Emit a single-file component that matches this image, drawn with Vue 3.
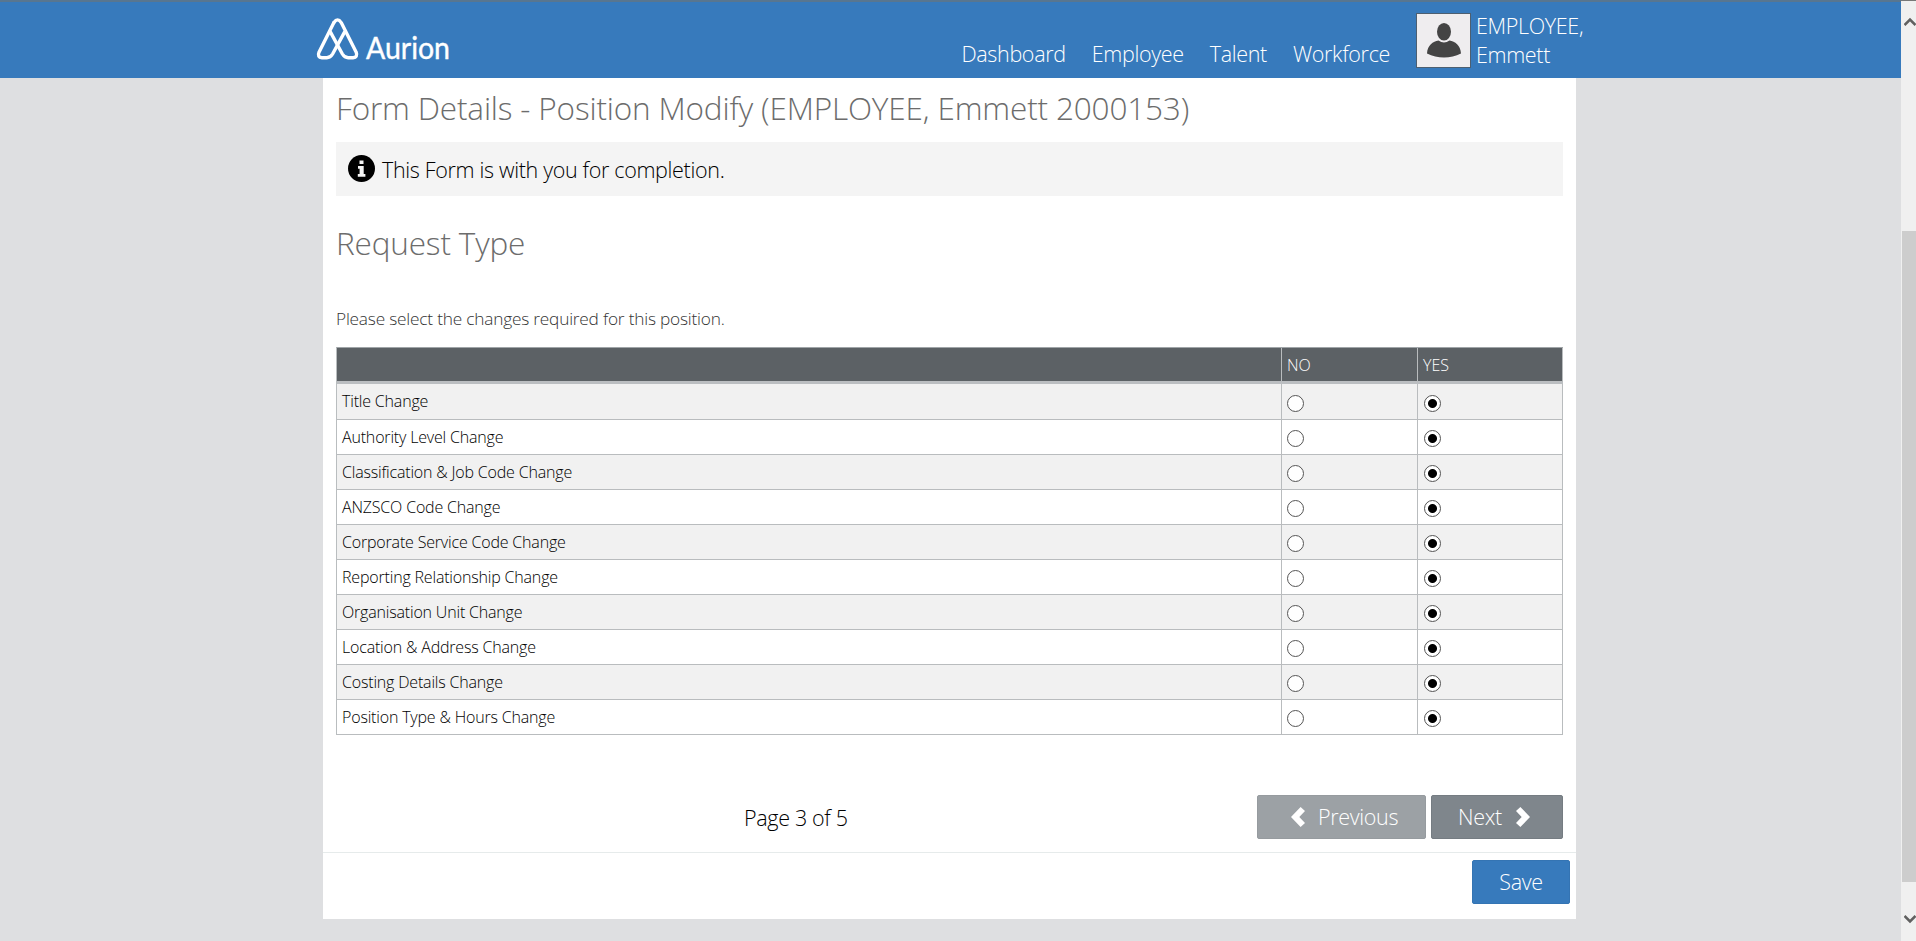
<script setup>
import { ref } from 'vue'

const nav = ['Dashboard', 'Employee', 'Talent', 'Workforce']
const rows = ref([
  'Title Change',
  'Authority Level Change',
  'Classification & Job Code Change',
  'ANZSCO Code Change',
  'Corporate Service Code Change',
  'Reporting Relationship Change',
  'Organisation Unit Change',
  'Location & Address Change',
  'Costing Details Change',
  'Position Type & Hours Change',
].map((label) => ({ label, value: 'yes' })))
</script>

<template>
  <div class="window">
    <div class="page">
      <header class="topbar">
        <svg class="logo" width="140" height="48" viewBox="0 0 140 48" role="img" aria-label="Aurion">
          <g fill="none" stroke="#fff" stroke-width="3.4" stroke-linejoin="round" stroke-linecap="round">
            <path d="M17.900 5.600Q21.600 0.200 25.200 5.600L40.200 35.200Q42 40.200 37 40.700H32.200Q28.600 40.700 26.400 37L14.600 15.400" />
            <path d="M17.900 5.600L3 35.200Q1 40.200 6 40.700H10.800Q14.400 40.700 16.600 37L28.400 15.400" />
          </g>
          <text class="wordmark" x="50" y="41.500" textLength="84" lengthAdjust="spacingAndGlyphs">Aurion</text>
        </svg>
        <nav class="nav">
          <a v-for="item in nav" :key="item">{{ item }}</a>
        </nav>
        <svg class="avatar" width="55" height="55" viewBox="0 0 55 55">
          <rect x="0.500" y="0.500" width="54" height="54" fill="#efedef" stroke="#4d5f70" />
          <ellipse cx="28" cy="18.700" rx="7" ry="8.800" fill="#444" />
          <path d="M11 40.500C11.500 32 17 28.500 22.500 27.500Q28 31.500 33.500 27.500C39 28.500 44.500 32 45 40.500Q37 44.500 28 44.500T11 40.500Z" fill="#444" />
        </svg>
        <div class="user"><span>EMPLOYEE,</span><span>Emmett</span></div>
      </header>

      <main class="panel">
        <div class="content">
          <h1>Form Details - Position Modify (EMPLOYEE, Emmett 2000153)</h1>
          <div class="info">
            <svg width="27" height="27" viewBox="0 0 27 27">
              <circle cx="13.500" cy="13.500" r="13.500" />
              <path d="M11.500 5.500h4v3.500h-4zM10 11h5.700v8h1.700v2.700h-7.600v-2.700h1.800v-5.300H10z" fill="#f4f4f4" />
            </svg>
            <span>This Form is with you for completion.</span>
          </div>
          <h2>Request Type</h2>
          <p class="hint">Please select the changes required for this position.</p>

          <div class="grid">
            <div class="row head"><div></div><div>NO</div><div>YES</div></div>
            <div v-for="(row, i) in rows" :key="row.label" class="row">
              <div>{{ row.label }}</div>
              <div><input v-model="row.value" type="radio" :name="'r' + i" value="no" /></div>
              <div><input v-model="row.value" type="radio" :name="'r' + i" value="yes" /></div>
            </div>
          </div>

          <div class="pager">
            <span class="count">Page 3 of 5</span>
            <button class="btn prev">
              <svg width="14" height="20" viewBox="0 0 14 20"><path d="M0 10L9.600 0L14 4L8.300 10L14 16L9.600 20Z" /></svg>
              <span>Previous</span>
            </button>
            <button class="btn next">
              <span>Next</span>
              <svg width="14" height="20" viewBox="0 0 14 20"><path d="M14 10L4.400 0L0 4L5.700 10L0 16L4.400 20Z" /></svg>
            </button>
          </div>
        </div>
        <footer class="actions"><button class="btn save"><span>Save</span></button></footer>
      </main>
    </div>

    <div class="scrollbar">
      <svg width="12" height="10" viewBox="0 0 12 10"><path d="M0.500 8L6 2.500L11.500 8" /></svg>
      <div class="thumb"></div>
      <svg width="12" height="10" viewBox="0 0 12 10"><path d="M0.500 2L6 7.500L11.500 2" /></svg>
    </div>
  </div>
</template>

<style>
body {
  background: #dedfe1;
  overflow: hidden;
}
</style>

<style scoped>
* {
  box-sizing: border-box;
}
.window {
  display: flex;
  height: 941px;
  font-family: 'Open Sans', 'Noto Sans', sans-serif;
  font-weight: 300;
  font-size: 21.5px;
  letter-spacing: -0.33px;
  color: #000;
  background: #dedfe1;
}
.page {
  width: 1901px;
}
.topbar {
  display: flex;
  height: 78px;
  padding-left: 316px;
  background: #377abc;
  border-top: 2px solid #587690;
  color: #fff;
}
.logo {
  margin-top: 15px;
}
.wordmark {
  font: 400 30px Lato, sans-serif;
  letter-spacing: 0;
  fill: #fff;
  stroke: #fff;
  stroke-width: 0.4px;
}
.nav {
  display: flex;
  gap: 26px;
  margin-left: auto;
  padding-top: 37px;
  line-height: 30px;
}
.avatar {
  margin: 11px 0 0 26px;
}
.user {
  display: flex;
  flex-direction: column;
  width: 430px;
  padding: 9px 0 0 5px;
  line-height: 29px;
}
.panel {
  width: 1253px;
  height: 841px;
  margin-left: 323px;
  background: #fff;
}
.content {
  padding: 0 13px;
}
h1,
h2 {
  margin: 0;
  font-size: 31.5px;
  font-weight: 300;
  letter-spacing: -0.16px;
  line-height: 60px;
  color: #6c6c6c;
}
h1 {
  padding-bottom: 4px;
}
h2 {
  padding-top: 17px;
}
.info {
  display: flex;
  align-items: center;
  gap: 7px;
  height: 54px;
  padding-left: 12px;
  background: #f4f4f4;
}
.info svg {
  margin-top: -2px;
}
.hint {
  margin: 34px 0 16px;
  font-size: 17.25px;
  letter-spacing: -0.2px;
  line-height: 24px;
  color: #333;
}
.grid {
  border-left: 1px solid #b9bdbf;
  border-top: 1px solid #a0a5a8;
  font-size: 16px;
  letter-spacing: -0.18px;
}
.row {
  display: grid;
  grid-template-columns: 945px 136px 145px;
  height: 35px;
  border-bottom: 1px solid #b9bcbe;
  line-height: 34px;
}
.row > div {
  display: flex;
  padding-left: 5px;
  border-right: 1px solid #b9bcbe;
}
.row:nth-child(odd) {
  background: #fff;
}
.row:nth-child(even) {
  background: #f1f1f1;
}
.row.head {
  height: 36px;
  background: #5c6165;
  border-bottom: 3px solid #bbbec1;
  color: #fff;
  letter-spacing: 0;
}
.row:nth-child(2) {
  height: 36px;
}
input {
  appearance: none;
  width: 17px;
  height: 17px;
  margin: 10px 0 0;
  border: 1px solid #555;
  border-radius: 50%;
  background: #fff;
}
.row > div:last-child input {
  margin-left: 1px;
}
.row:nth-child(2) input {
  margin-top: 11px;
}
input:checked {
  background: radial-gradient(circle, #000 4px, #fff 5px);
}
.pager {
  display: flex;
  height: 117px;
  padding-top: 60px;
}
.count {
  margin: 0 auto 0 408px;
  line-height: 45px;
}
.btn {
  display: flex;
  align-items: center;
  height: 44px;
  padding: 0;
  border: 1px solid transparent;
  border-radius: 2px;
  color: #fff;
  font: inherit;
  letter-spacing: inherit;
  line-height: 40px;
}
.btn svg {
  fill: #fff;
}
.prev {
  width: 169px;
  padding-left: 33px;
  gap: 13px;
  background: #9ca1a5;
  border-color: #969b9f;
}
.next {
  width: 132px;
  margin-left: 5px;
  padding-left: 26px;
  gap: 14px;
  background: #7f868c;
  border-color: #757c82;
}
.actions {
  display: flex;
  justify-content: flex-end;
  border-top: 1px solid #e6ebeb;
  padding: 7px 6px 0 0;
}
.save {
  width: 98px;
  justify-content: center;
  background: #377abc;
  border-color: #3474b3;
}
.scrollbar {
  display: flex;
  flex-direction: column;
  width: 15px;
  border-top: 1px solid #777;
  background: #f0f0f0;
}
.scrollbar svg {
  margin: 16px 0 0 3px;
  fill: none;
  stroke: #606060;
  stroke-width: 2.600;
}
.thumb {
  height: 651px;
  margin: 204px 0 16px 1px;
  background: #cdcdcd;
}
</style>
